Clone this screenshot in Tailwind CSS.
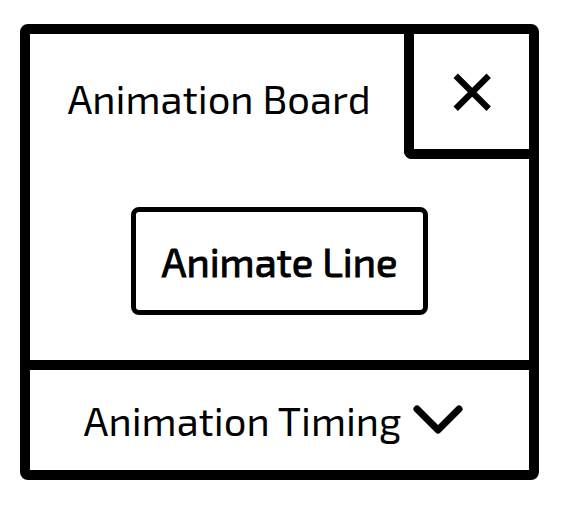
<!DOCTYPE html>
<html lang="en">
<head>
<meta charset="utf-8">
<meta name="viewport" content="width=device-width, initial-scale=1">
<title>Animation Board</title>
<script src="https://cdn.jsdelivr.net/npm/@tailwindcss/browser@4"></script>
</head>
<body class="bg-white pl-5 pr-[26px] pt-6 text-black font-['Exo_2','Open_Sans',sans-serif]">
<main class="rounded-lg border-10 border-black">
  <header class="flex items-start">
    <h1 class="flex-1 pt-[38px] pl-1 text-center text-[40px] leading-[52px] whitespace-nowrap">Animation Board</h1>
    <button type="button" aria-label="Close" class="flex h-[125px] w-[125px] shrink-0 items-center justify-center rounded-bl-lg border-b-10 border-l-10 border-black">
      <svg class="size-10" viewBox="0 0 40 40" fill="none" stroke="currentColor" stroke-width="6.2" aria-hidden="true"><path d="M3.7 3.7 36.7 36.7M36.7 3.7 3.7 36.7"/></svg>
    </button>
  </header>
  <section class="flex justify-center pt-12 pb-[45px]">
    <button type="button" class="rounded-lg border-5 border-black px-[26px] py-[23px] text-[40px] leading-[52px] font-normal whitespace-nowrap [-webkit-text-stroke:1px_black]">Animate Line</button>
  </section>
  <button type="button" class="flex w-full items-center justify-center gap-3 border-t-10 border-black py-6 pr-3 text-[40px] leading-[52px] whitespace-nowrap">
    Animation Timing
    <svg class="h-8 w-[50px] shrink-0" viewBox="0 0 50 32" fill="none" stroke="currentColor" stroke-width="7" stroke-linecap="round" stroke-linejoin="round" aria-hidden="true"><path d="M4 5 25 26 46 5"/></svg>
  </button>
</main>
</body>
</html>
